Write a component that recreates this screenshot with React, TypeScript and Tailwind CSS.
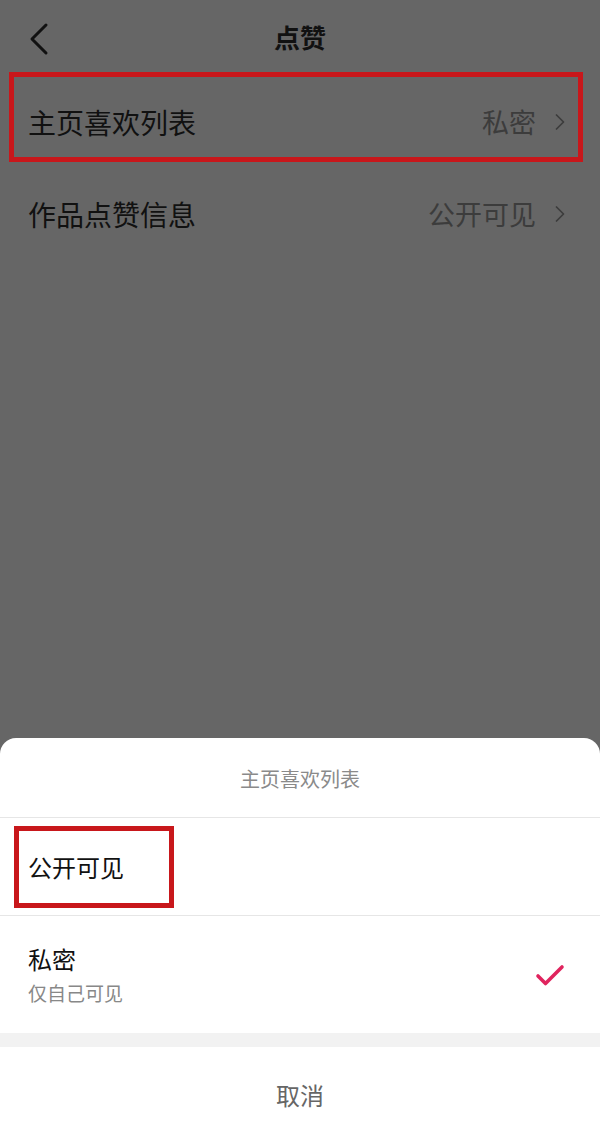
import { Check, ChevronRight } from 'lucide-react';

const font = { fontFamily: '"Noto Sans CJK SC", "Noto Sans", sans-serif' };

function SettingRow({ label, value, marked }: { label: string; value: string; marked?: boolean }) {
  return (
    <div
      className={`ml-[9px] mr-[17px] flex h-[90px] items-center justify-between pl-[14px] pr-[4px] pt-[10px] ${
        marked ? 'border-[5px] border-[#c8171b]' : 'border-[5px] border-transparent'
      }`}
    >
      <span className="text-[28px] text-[#111]">{label}</span>
      <div className="flex items-center gap-[10px]">
        <span className="text-[27px] text-[#3c3c3c]">{value}</span>
        <ChevronRight className="h-[28px] w-[28px] text-[#3c3c3c]" strokeWidth={1.5} />
      </div>
    </div>
  );
}

export default function App() {
  return (
    <div style={font} className="flex h-[1130px] w-[600px] flex-col overflow-hidden bg-[#666666]">
      {/* Top bar */}
      <header className="relative flex h-[72px] items-center justify-center">
        <svg
          className="absolute left-[26px] top-[22px]"
          width="26"
          height="34"
          viewBox="0 0 26 34"
          fill="none"
          stroke="#111"
          strokeWidth="3"
          strokeLinecap="round"
          strokeLinejoin="round"
        >
          <polyline points="20,3 6,17 20,31" />
        </svg>
        <h1 className="text-[26px] font-bold text-[#111]">点赞</h1>
      </header>

      <SettingRow label="主页喜欢列表" value="私密" marked />
      <div className="h-[2px]" />
      <SettingRow label="作品点赞信息" value="公开可见" />

      {/* Bottom sheet */}
      <div className="mt-auto h-[392px] rounded-t-[16px] bg-white">
        <div className="flex h-[80px] items-center justify-center border-b border-[#e6e6e6] pt-[2px]">
          <span className="text-[20px] text-[#8a8a8a]">主页喜欢列表</span>
        </div>

        <div className="flex h-[98px] items-center border-b border-[#e6e6e6] pl-[14px]">
          <div className="flex h-[82px] w-[160px] items-center border-[5px] border-[#c8171b] pl-[9px]">
            <span className="text-[24px] text-[#111]">公开可见</span>
          </div>
        </div>

        <div className="flex h-[117px] items-center justify-between pl-[28px] pr-[32px] pt-[2px]">
          <div className="flex flex-col">
            <span className="text-[24px] leading-[34px] text-[#111]">私密</span>
            <span className="text-[19px] leading-[34px] text-[#888]">仅自己可见</span>
          </div>
          <Check className="h-[36px] w-[36px] text-[#e0245e]" strokeWidth={2.4} />
        </div>

        <div className="h-[14px] bg-[#f2f2f2]" />

        <div className="flex h-[82px] items-center justify-center pt-[14px]">
          <span className="text-[24px] text-[#666]">取消</span>
        </div>
      </div>
    </div>
  );
}
